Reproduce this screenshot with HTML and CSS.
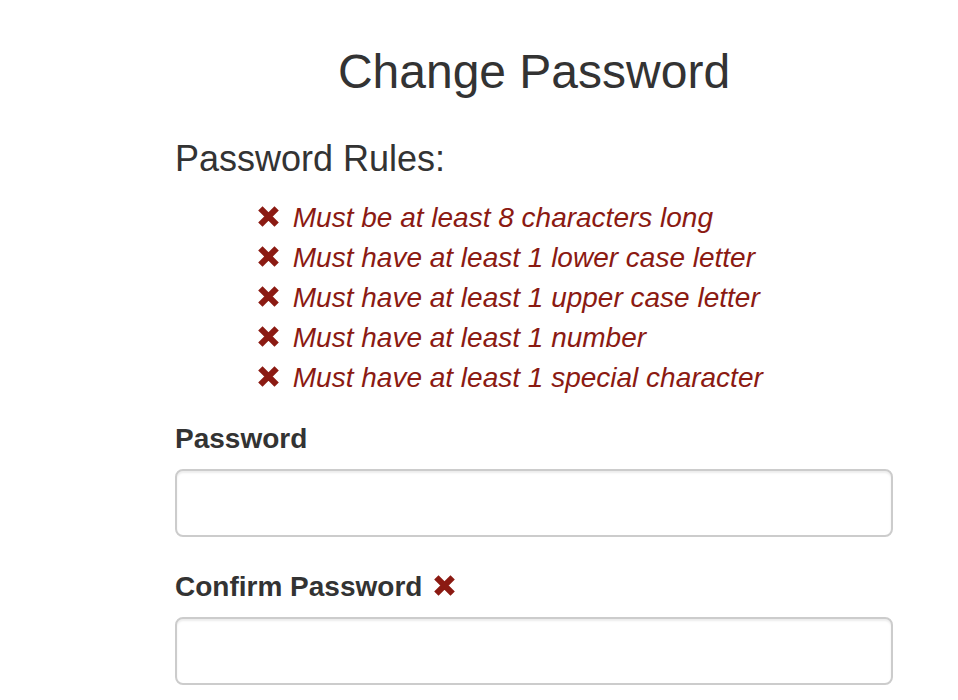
FILE: index.html
```html
<!DOCTYPE html>
<html>
<head>
<meta charset="utf-8">
<title>Change Password</title>
<link rel="stylesheet" href="styles.css">
</head>
<body>
<div class="container">
  <h3 class="title">Change Password</h3>
  <h4 class="rules-title">Password Rules:</h4>
  <ul class="rules">
    <li><svg class="x" viewBox="0 0 24 24"><path d="M3.5 3.5 L20.5 20.5 M20.5 3.5 L3.5 20.5"/></svg> Must be at least 8 characters long</li>
    <li><svg class="x" viewBox="0 0 24 24"><path d="M3.5 3.5 L20.5 20.5 M20.5 3.5 L3.5 20.5"/></svg> Must have at least 1 lower case letter</li>
    <li><svg class="x" viewBox="0 0 24 24"><path d="M3.5 3.5 L20.5 20.5 M20.5 3.5 L3.5 20.5"/></svg> Must have at least 1 upper case letter</li>
    <li><svg class="x" viewBox="0 0 24 24"><path d="M3.5 3.5 L20.5 20.5 M20.5 3.5 L3.5 20.5"/></svg> Must have at least 1 number</li>
    <li><svg class="x" viewBox="0 0 24 24"><path d="M3.5 3.5 L20.5 20.5 M20.5 3.5 L3.5 20.5"/></svg> Must have at least 1 special character</li>
  </ul>
  <div class="form-group">
    <label class="label">Password</label>
    <input class="input" type="password">
  </div>
  <div class="form-group">
    <label class="label">Confirm Password <svg class="x" viewBox="0 0 24 24"><path d="M3.5 3.5 L20.5 20.5 M20.5 3.5 L3.5 20.5"/></svg></label>
    <input class="input" type="password">
  </div>
</div>
</body>
</html>
```

FILE: styles.css
```css
html, body {
  margin: 0;
  padding: 0;
  background: #fff;
}
body {
  font-family: "Liberation Sans", Arial, sans-serif;
  font-size: 28px;
  line-height: 40px;
  color: #333;
}
.container {
  margin-left: 175px;
  width: 718px;
  padding-top: 6px;
}
.title {
  font-size: 48px;
  font-weight: 400;
  line-height: 1.1;
  margin: 40px 0 20px;
  text-align: center;
}
.rules-title {
  font-size: 36px;
  font-weight: 400;
  line-height: 1.1;
  margin: 40px 0 20px;
}
.rules {
  list-style: none;
  margin: 0 0 21px;
  padding-left: 82px;
  color: #8b1a12;
  font-style: italic;
}
.rules .x {
  margin-right: 5px;
}
.x {
  width: 23px;
  height: 23px;
  vertical-align: -1px;
  fill: none;
  stroke: #8b1a12;
  stroke-width: 6.4;
}
.form-group {
  margin-bottom: 30px;
}
.label {
  display: inline-block;
  font-weight: 700;
  margin-bottom: 10px;
}
.label .x {
  margin-left: 3px;
}
.input {
  display: block;
  box-sizing: border-box;
  width: 718px;
  height: 68px;
  border: 2px solid #ccc;
  border-radius: 8px;
  box-shadow: inset 0 2px 2px rgba(0,0,0,.075);
  background: #fff;
  padding: 12px 24px;
  font-size: 28px;
  margin: 0;
}
```
